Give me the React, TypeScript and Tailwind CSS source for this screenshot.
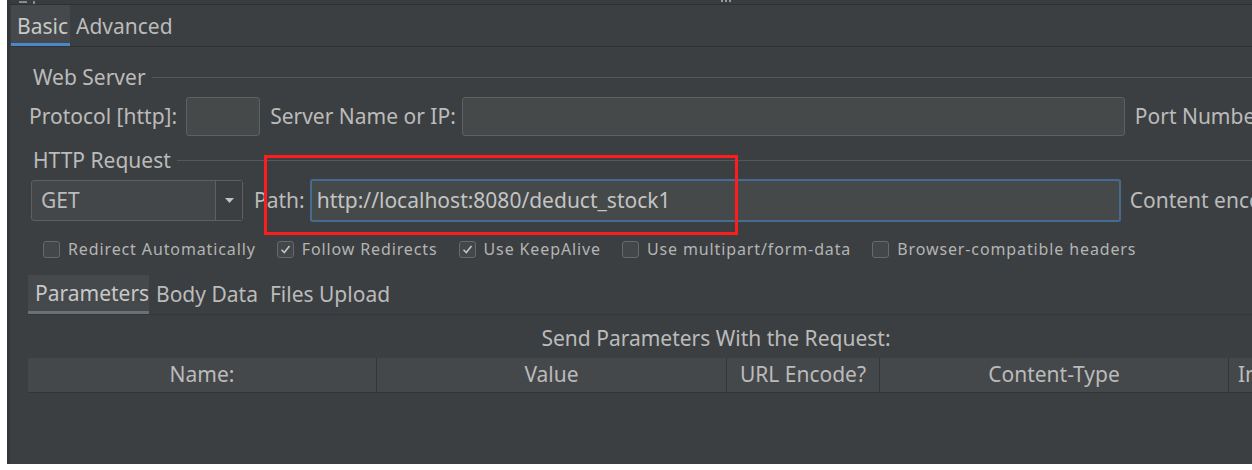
const sans = "font-['Noto_Sans',sans-serif]";

type Opt = { label: string; checked: boolean };

const options: Opt[] = [
  { label: 'Redirect Automatically', checked: false },
  { label: 'Follow Redirects', checked: true },
  { label: 'Use KeepAlive', checked: true },
  { label: 'Use multipart/form-data', checked: false },
  { label: 'Browser-compatible headers', checked: false },
];

const columns = [
  { title: 'Name:', w: 'w-[348px]', align: 'justify-center' },
  { title: 'Value', w: 'w-[350px]', align: 'justify-center' },
  { title: 'URL Encode?', w: 'w-[153px]', align: 'justify-center' },
  { title: 'Content-Type', w: 'w-[349px]', align: 'justify-center' },
  { title: 'Include Equals?', w: 'w-[176px]', align: 'justify-start pl-[9px]' },
];

function GroupTitle({ text }: { text: string }) {
  return (
    <div className="flex h-[24px] items-center">
      <span className="ml-[23px] text-[21px] leading-none text-[#bbbbbb]">{text}</span>
      <div className="ml-[6px] h-px flex-1 bg-[#56595b]" />
    </div>
  );
}

function Check({ checked }: { checked: boolean }) {
  return (
    <div className="flex h-[17px] w-[17px] shrink-0 items-center justify-center rounded-[3px] border border-[#676a6c] bg-[#43474a]">
      {checked && (
        <svg width="11" height="11" viewBox="0 0 11 11">
          <path d="M1.5 5.8 L4.3 8.6 L9.5 2" fill="none" stroke="#c4c4c4" strokeWidth="1.6" />
        </svg>
      )}
    </div>
  );
}

export default function App() {
  return (
    <div className={`relative flex h-[470px] w-[1252px] overflow-hidden bg-white ${sans}`}>
      <div className="w-[7px] shrink-0 bg-white" />
      <div className="flex h-[464px] min-w-0 flex-1 flex-col border-l-[3px] border-[#34373a] bg-[#3c3f41]">
        {/* top strip */}
        <div className="flex h-[5px] shrink-0 items-start border-b border-[#2e3032] bg-[#393b3d]">
          <div className="ml-[9px] mt-px h-[2px] w-[8px] bg-[#8a8a8a]" />
          <div className="ml-[6px] mt-px h-[3px] w-[2px] bg-[#8a8a8a]" />
          <div className="ml-[686px] mt-0 flex gap-[2px]">
            <div className="h-[2px] w-[2px] bg-[#9a9a9a]" />
            <div className="h-[2px] w-[2px] bg-[#9a9a9a]" />
            <div className="h-[2px] w-[2px] bg-[#9a9a9a]" />
          </div>
        </div>

        {/* main tabs */}
        <div className="flex h-[42px] shrink-0 items-stretch border-b border-[#303234]">
          <div className="ml-px flex w-[59px] shrink-0 items-center border-b-[3px] border-[#4a88c7] bg-[#45494b] pl-[6px] pt-[6px] text-[21px] text-[#c8c8c8]">
            Basic
          </div>
          <div className="flex items-center pl-[6px] pt-[3px] text-[21px] text-[#bbbbbb]">Advanced</div>
        </div>

        <div className="mt-[18px]">
          <GroupTitle text="Web Server" />
        </div>

        <div className="mt-[8px] flex h-[39px] items-center whitespace-nowrap text-[21px] text-[#bbbbbb]">
          <span className="ml-[19px]">Protocol [http]:</span>
          <div className="ml-[9px] h-[39px] w-[74px] shrink-0 rounded-[3px] border border-[#5e6163] bg-[#45494a]" />
          <span className="ml-[10px]">Server Name or IP:</span>
          <div className="ml-[6px] h-[39px] w-[663px] shrink-0 rounded-[3px] border border-[#5e6163] bg-[#45494a]" />
          <span className="ml-[10px]">Port Number:</span>
        </div>

        <div className="mt-[12px]">
          <GroupTitle text="HTTP Request" />
        </div>

        <div className="mt-[7px] flex h-[43px] items-center whitespace-nowrap text-[21px] text-[#bbbbbb]">
          <div className="ml-[21px] flex h-[41px] w-[212px] shrink-0 rounded-[3px] border border-[#5e6163] bg-[#43474a]">
            <div className="flex flex-1 items-center pl-[9px]">GET</div>
            <div className="flex w-[27px] items-center justify-center border-l border-[#5e6163] bg-[#3c3f41]">
              <svg width="9" height="5" viewBox="0 0 9 5">
                <path d="M0 0 H9 L4.5 5 Z" fill="#c2c2c2" />
              </svg>
            </div>
          </div>
          <span className="ml-[11px]">Path:</span>
          <div className="ml-[5px] flex h-[43px] w-[811px] shrink-0 items-center rounded-[3px] border-2 border-[#466b91] bg-[#45494a] pl-[5px] text-[#c4c4c4]">
            http://localhost:8080/deduct_stock1
          </div>
          <span className="ml-[9px]">Content encoding:</span>
        </div>

        <div className="mt-[17px] flex h-[20px] items-center pl-[33px] text-[16px] tracking-[0.055em] text-[#b4b4b4]">
          {options.map((o) => (
            <div key={o.label} className="mr-[21px] flex shrink-0 items-center">
              <Check checked={o.checked} />
              <span className="ml-[8px] whitespace-nowrap">{o.label}</span>
            </div>
          ))}
        </div>

        {/* sub tabs */}
        <div className="ml-[18px] mt-[16px] flex h-[40px] shrink-0 items-stretch border-b border-[#34373a] text-[21px] text-[#bbbbbb]">
          <div className="flex w-[121px] shrink-0 items-center border-b-[3px] border-[#6b7074] bg-[#46494b] pl-[7px] pt-[2px] text-[#c8c8c8]">
            Parameters
          </div>
          <div className="flex items-center pl-[7px]">Body Data</div>
          <div className="flex items-center pl-[12px]">Files Upload</div>
        </div>

        <div className="ml-[18px] w-[1376px] shrink-0">
          <div className="mt-[12px] flex h-[24px] items-center justify-center text-[21px] text-[#bbbbbb]">
            Send Parameters With the Request:
          </div>
          <div className="mt-[7px] flex h-[35px] border-b border-[#333537] bg-[#45484a] text-[21px] text-[#bbbbbb]">
            {columns.map((c, i) => (
              <div
                key={c.title}
                className={`flex shrink-0 items-center whitespace-nowrap ${c.w} ${c.align} ${i > 0 ? 'border-l border-[#333537]' : ''}`}
              >
                {c.title}
              </div>
            ))}
          </div>
        </div>
      </div>

      {/* highlight marker drawn over the screenshot */}
      <div className="pointer-events-none absolute left-[264px] top-[155px] h-[80px] w-[474px] border-[3px] border-[#ff1c1c]" />
    </div>
  );
}
